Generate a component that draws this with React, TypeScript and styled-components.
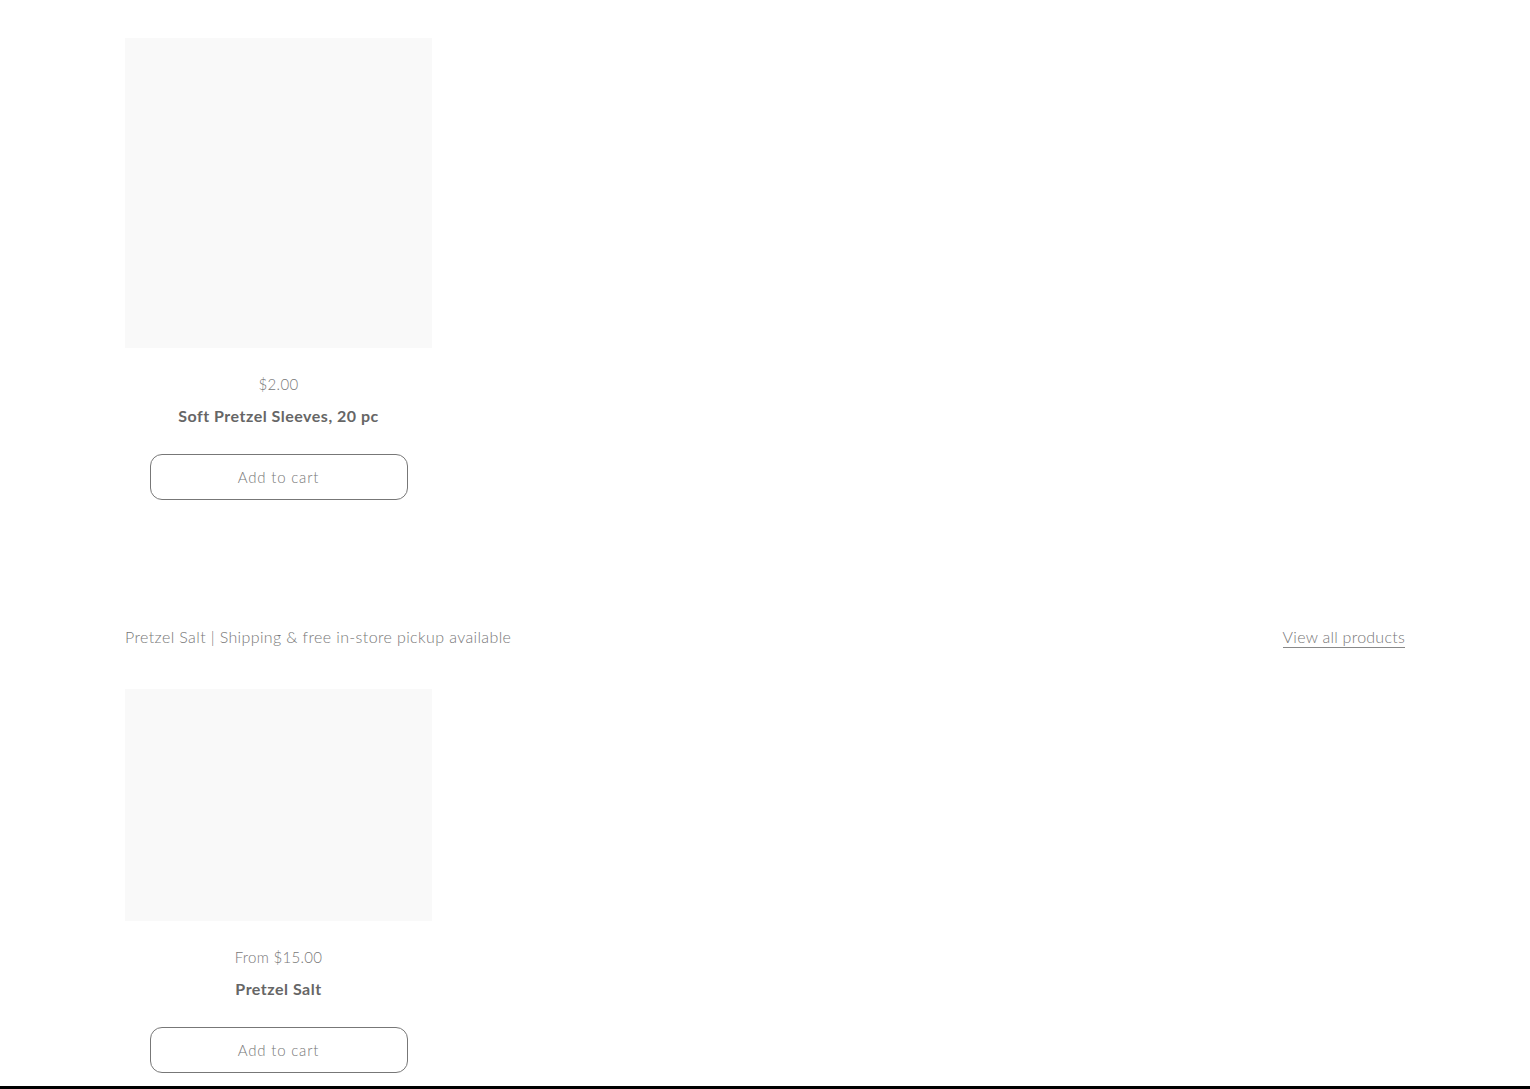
import styled, { createGlobalStyle } from "styled-components"

type Product = {
  price: string
  title: string
  imageHeight: number
}

const GlobalStyle = createGlobalStyle`
  html, body {
    margin: 0;
    padding: 0;
    background: #fff;
    font-family: Lato, "Open Sans", sans-serif;
    color: #666;
  }
`

export default function App() {
  return (
    <>
      <GlobalStyle />
      <Page>
        <Collection top="38px">
          <Grid>
            <ProductCard price="$2.00" title="Soft Pretzel Sleeves, 20 pc" imageHeight={310} />
          </Grid>
        </Collection>
        <Collection top="126px">
          <Header>
            <Heading>Pretzel Salt | Shipping &amp; free in-store pickup available</Heading>
            <ViewAll href="#">View all products</ViewAll>
          </Header>
          <Grid>
            <ProductCard price="From $15.00" title="Pretzel Salt" imageHeight={232} />
          </Grid>
        </Collection>
      </Page>
      <Footer />
    </>
  )
}

function ProductCard({ price, title, imageHeight }: Product) {
  return (
    <Card>
      <Placeholder h={imageHeight} />
      <Price>{price}</Price>
      <Title>{title}</Title>
      <CartButton>Add to cart</CartButton>
    </Card>
  )
}

const Page = styled.main`
  width: 1280px;
  margin: 0 auto;
  min-height: 1086px;
`

const Collection = styled.section<{ top: string }>`
  padding-top: ${({ top }) => top};
`

const Header = styled.div`
  display: flex;
  justify-content: space-between;
  align-items: baseline;
  margin-bottom: 41px;
`

const Heading = styled.h2`
  margin: 0;
  font-size: 16px;
  font-weight: 300;
  color: #777;
  line-height: 22px;
  letter-spacing: 0.38px;
`

const ViewAll = styled.a`
  font-size: 16px;
  font-weight: 300;
  color: #777;
  text-decoration: none;
  border-bottom: 1px solid #888;
  line-height: 20px;
  letter-spacing: 0.25px;
`

const Grid = styled.div`
  display: grid;
  grid-template-columns: repeat(4, 307px);
  column-gap: 13px;
`

const Card = styled.div`
  display: flex;
  flex-direction: column;
  align-items: center;
`

const Placeholder = styled.div<{ h: number }>`
  width: 100%;
  height: ${({ h }) => h}px;
  background: #f9f9f9;
`

const Price = styled.div`
  margin-top: 26px;
  font-size: 15px;
  font-weight: 300;
  color: #777;
  line-height: 20px;
  letter-spacing: 0.3px;
`

const Title = styled.div`
  margin-top: 11px;
  font-size: 16px;
  font-weight: 700;
  color: #666;
  line-height: 22px;
  letter-spacing: 0.5px;
`

const CartButton = styled.button`
  margin-top: 27px;
  width: 258px;
  height: 46px;
  padding: 0;
  border: 1px solid #777;
  border-radius: 12px;
  background: #fff;
  font-family: Lato, "Open Sans", sans-serif;
  font-size: 15px;
  font-weight: 300;
  color: #777;
  letter-spacing: 0.8px;
  cursor: pointer;
`

const Footer = styled.div`
  height: 3px;
  background: #000;
`
